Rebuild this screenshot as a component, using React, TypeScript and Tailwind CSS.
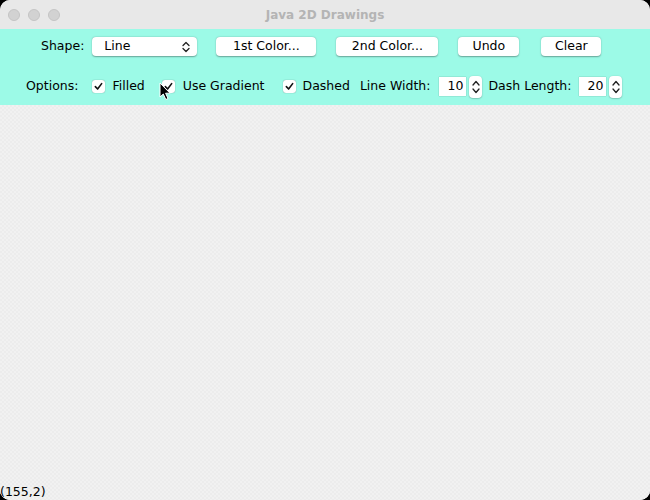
import React from 'react';

const font = { fontFamily: '"DejaVu Sans", "Liberation Sans", sans-serif' };

const Button: React.FC<{ label: string; w: string }> = ({ label, w }) => (
  <div
    className={`${w} h-[19px] bg-white rounded-[4px] shadow-[0_0.5px_1.5px_rgba(0,0,0,0.35)] flex items-center justify-center text-[12.5px] text-black`}
  >
    {label}
  </div>
);

const Check: React.FC = () => (
  <div className="w-[13px] h-[13px] bg-white rounded-[3px] shadow-[0_0_1px_rgba(0,0,0,0.5)] flex items-center justify-center">
    <svg width="9" height="9" viewBox="0 0 10 10">
      <path d="M1.5 5.2 L4 7.8 L8.5 1.8" fill="none" stroke="#111" strokeWidth="1.8" strokeLinecap="round" strokeLinejoin="round" />
    </svg>
  </div>
);

const Spinner: React.FC<{ value: string }> = ({ value }) => (
  <div className="flex items-center gap-[3px]">
    <div className="w-[27px] h-[19px] bg-white flex items-center justify-end pr-[3px] text-[12.5px] text-black shadow-[0_0_1px_rgba(0,0,0,0.4)]">
      {value}
    </div>
    <div className="w-[13px] h-[22px] bg-white rounded-[4px] shadow-[0_0.5px_1.5px_rgba(0,0,0,0.35)] flex flex-col items-center justify-center gap-[2px]">
      <svg width="8" height="6" viewBox="0 0 8 6">
        <path d="M1 5 L4 1.5 L7 5" fill="none" stroke="#222" strokeWidth="1.3" strokeLinecap="round" strokeLinejoin="round" />
      </svg>
      <svg width="8" height="6" viewBox="0 0 8 6">
        <path d="M1 1 L4 4.5 L7 1" fill="none" stroke="#222" strokeWidth="1.3" strokeLinecap="round" strokeLinejoin="round" />
      </svg>
    </div>
  </div>
);

const App: React.FC = () => {
  return (
    <div className="w-[650px] h-[500px] bg-black" style={font}>
      <div className="relative w-full h-full rounded-[10px] overflow-hidden flex flex-col bg-[#efefef]">
        {/* title bar */}
        <div className="relative h-[29px] bg-[#e8e8e8] flex items-center shrink-0">
          <div className="flex gap-[8px] pl-[8px]">
            <span className="w-[12px] h-[12px] rounded-full bg-[#d2d2d2] border border-[#c4c4c4]" />
            <span className="w-[12px] h-[12px] rounded-full bg-[#d2d2d2] border border-[#c4c4c4]" />
            <span className="w-[12px] h-[12px] rounded-full bg-[#d2d2d2] border border-[#c4c4c4]" />
          </div>
          <div className="flex-1 text-center text-[12px] font-bold text-[#b4b4b4] pr-[60px]">Java 2D Drawings</div>
        </div>

        {/* controls */}
        <div className="h-[76px] bg-[#9cfae7] shrink-0 flex flex-col">
          <div className="flex items-center h-[34px] pt-[1px] pl-[41px] text-[12.5px] text-black">
            <span>Shape:</span>
            <div className="ml-[8px] w-[105px] h-[19px] bg-white rounded-[4px] shadow-[0_0.5px_1.5px_rgba(0,0,0,0.35)] flex items-center justify-between pl-[12px] pr-[7px]">
              <span>Line</span>
              <svg width="8" height="12" viewBox="0 0 8 12">
                <path d="M1 4.5 L4 1.5 L7 4.5 M1 7.5 L4 10.5 L7 7.5" fill="none" stroke="#222" strokeWidth="1.3" strokeLinecap="round" strokeLinejoin="round" />
              </svg>
            </div>
            <div className="ml-[19px]"><Button label="1st Color..." w="w-[100px]" /></div>
            <div className="ml-[20px]"><Button label="2nd Color..." w="w-[102px]" /></div>
            <div className="ml-[20px]"><Button label="Undo" w="w-[61px]" /></div>
            <div className="ml-[22px]"><Button label="Clear" w="w-[60px]" /></div>
          </div>
          <div className="flex items-center h-[42px] pt-[5px] pl-[26px] text-[12.5px] text-black whitespace-nowrap">
            <span>Options:</span>
            <div className="ml-[14px]"><Check /></div>
            <span className="ml-[7px]">Filled</span>
            <div className="ml-[17px]"><Check /></div>
            <span className="ml-[8px]">Use Gradient</span>
            <div className="ml-[18px]"><Check /></div>
            <span className="ml-[7px]">Dashed</span>
            <span className="ml-[10px]">Line Width:</span>
            <div className="ml-[9px]"><Spinner value="10" /></div>
            <span className="ml-[6px]">Dash Length:</span>
            <div className="ml-[8px]"><Spinner value="20" /></div>
          </div>
        </div>

        {/* canvas */}
        <div className="flex-1 flex flex-col justify-end bg-[#efefef] bg-[repeating-conic-gradient(#ececec_0%_25%,#f1f1f1_0%_50%)] bg-[length:4px_4px]">
          <div className="text-[12.5px] leading-[14px] text-black pb-[1px]">(155,2)</div>
        </div>

        {/* mouse cursor */}
        <svg className="absolute left-[159px] top-[82px]" width="12" height="19" viewBox="0 0 12 19">
          <path d="M1 1 L1 15 L4.3 12 L6.8 17.5 L9 16.5 L6.6 11.2 L11 11.2 Z" fill="#000" stroke="#fff" strokeWidth="1" strokeLinejoin="round" />
        </svg>
      </div>
    </div>
  );
};

export default App;
